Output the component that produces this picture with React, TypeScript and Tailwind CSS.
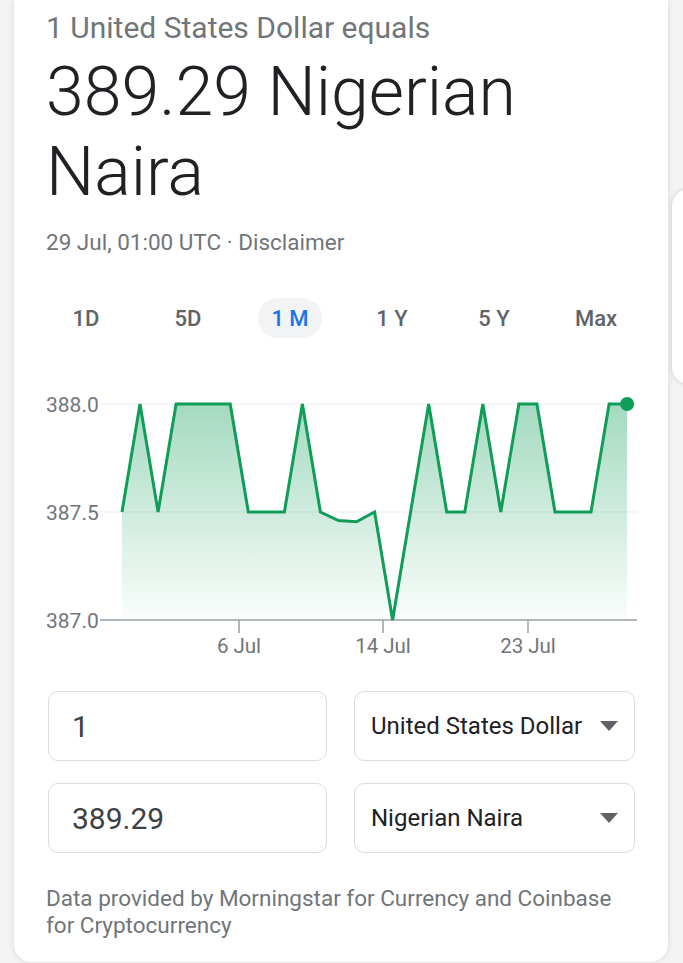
import React from "react";

const values = [
  387.5, 388, 387.5, 388, 388, 388, 388, 387.5, 387.5, 387.5, 388, 387.5, 387.46, 387.455, 387.5,
  387.0, 387.5, 388, 387.5, 387.5, 388, 387.5, 388, 388, 387.5, 387.5, 387.5, 388, 388,
];

// chart coordinates are relative to the card (card left = page x 14, chart top = page y 380)
const X0 = 108;
const STEP = 18.04;
const yOf = (v: number) => 24 + (388 - v) * 216;

function Chart() {
  const pts = values.map((v, i) => [X0 + i * STEP, yOf(v)] as const);
  const line = pts.map(([x, y], i) => `${i ? "L" : "M"}${x.toFixed(1)} ${y.toFixed(1)}`).join(" ");
  const last = pts[pts.length - 1];
  const area = `${line} L${last[0].toFixed(1)} 240 L${X0} 240 Z`;
  const ticks = [
    { x: 225, label: "6 Jul" },
    { x: 369, label: "14 Jul" },
    { x: 514, label: "23 Jul" },
  ];

  return (
    <svg width="654" height="290" viewBox="0 0 654 290" className="block">
      <defs>
        <linearGradient id="fill" x1="0" y1="0" x2="0" y2="1">
          <stop offset="0%" stopColor="#0f9d58" stopOpacity="0.38" />
          <stop offset="100%" stopColor="#0f9d58" stopOpacity="0.02" />
        </linearGradient>
      </defs>
      <line x1="86" y1="24" x2="623" y2="24" stroke="#f1f3f4" strokeWidth="1.5" />
      <line x1="86" y1="132" x2="623" y2="132" stroke="#f1f3f4" strokeWidth="1.5" />
      <path d={area} fill="url(#fill)" />
      <line x1="86" y1="240" x2="623" y2="240" stroke="#9aa0a6" strokeWidth="1.5" />
      {ticks.map((t) => (
        <g key={t.label}>
          <line x1={t.x} y1="240" x2={t.x} y2="253" stroke="#9aa0a6" strokeWidth="1.5" />
          <text
            x={t.x}
            y="273"
            textAnchor="middle"
            fontFamily="Roboto, sans-serif"
            fontSize="20.5"
            fill="#70757a"
          >
            {t.label}
          </text>
        </g>
      ))}
      {[
        { y: 24, label: "388.0" },
        { y: 132, label: "387.5" },
        { y: 240, label: "387.0" },
      ].map((l) => (
        <text
          key={l.label}
          x="32"
          y={l.y + 7.5}
          fontFamily="Roboto, sans-serif"
          fontSize="21"
          fill="#70757a"
        >
          {l.label}
        </text>
      ))}
      <path d={line} fill="none" stroke="#0f9d58" strokeWidth="3" strokeLinejoin="miter" />
      <circle cx={last[0]} cy={last[1]} r="7" fill="#0f9d58" />
    </svg>
  );
}

function Caret() {
  return (
    <svg width="18" height="10" viewBox="0 0 18 10" className="shrink-0">
      <path d="M0 0 L18 0 L9 10 Z" fill="#5f6368" />
    </svg>
  );
}

export default function App() {
  const tabs = ["1D", "5D", "1 M", "1 Y", "5 Y", "Max"];

  return (
    <div
      className="flex h-[963px] w-[683px] gap-[3px] overflow-hidden bg-[#f4f4f5] pl-[14px]"
      style={{ fontFamily: "Roboto, 'Noto Sans', sans-serif" }}
    >
      <div className="flex h-[962px] w-[654px] shrink-0 flex-col rounded-b-[18px] bg-white shadow-[0_0_6px_rgba(0,0,0,0.12)]">
        <div className="px-[32px] pt-[10px]">
          <div className="text-[30px] leading-[36px] text-[#70757a]">1 United States Dollar equals</div>
          <div className="mt-[6px] text-[68px] font-light leading-[80px] text-[#202124]">
            389.29 Nigerian Naira
          </div>
          <div className="mt-[16px] text-[22.5px] leading-[28px] text-[#70757a]">
            29 Jul, 01:00 UTC · Disclaimer
          </div>
        </div>

        <div className="mt-[42px] flex px-[21px]">
          {tabs.map((t) => (
            <div key={t} className="flex w-[102.4px] justify-center">
              <span
                className={
                  t === "1 M"
                    ? "flex h-[40px] w-[64px] items-center justify-center rounded-full bg-[#f1f3f4] text-[22px] font-medium text-[#1a73e8]"
                    : "flex h-[40px] items-center justify-center text-[22px] font-medium text-[#5f6368]"
                }
              >
                {t}
              </span>
            </div>
          ))}
        </div>

        <div className="mt-[42px]">
          <Chart />
        </div>

        <div className="mt-[21px] grid grid-cols-[279px_281px] gap-x-[27px] gap-y-[22px] pl-[34px]">
          <div className="flex h-[70px] items-center rounded-[10px] border border-[#dadce0] px-[23px] text-[30px] text-[#3c4043]">
            1
          </div>
          <div className="flex h-[70px] items-center justify-between rounded-[10px] border border-[#dadce0] pl-[16px] pr-[16px] text-[24px] text-[#202124]">
            <span>United States Dollar</span>
            <Caret />
          </div>
          <div className="flex h-[70px] items-center rounded-[10px] border border-[#dadce0] px-[23px] text-[30px] text-[#3c4043]">
            389.29
          </div>
          <div className="flex h-[70px] items-center justify-between rounded-[10px] border border-[#dadce0] pl-[16px] pr-[16px] text-[24px] text-[#202124]">
            <span>Nigerian Naira</span>
            <Caret />
          </div>
        </div>

        <div className="mt-[32px] px-[32px] text-[22.5px] leading-[27px] text-[#70757a]">
          Data provided by Morningstar for Currency and Coinbase for Cryptocurrency
        </div>
      </div>

      <div className="mt-[188px] h-[197px] w-[40px] shrink-0 rounded-l-[18px] border border-[#e0e0e0] bg-white shadow-[0_0_4px_rgba(0,0,0,0.1)]" />
    </div>
  );
}
